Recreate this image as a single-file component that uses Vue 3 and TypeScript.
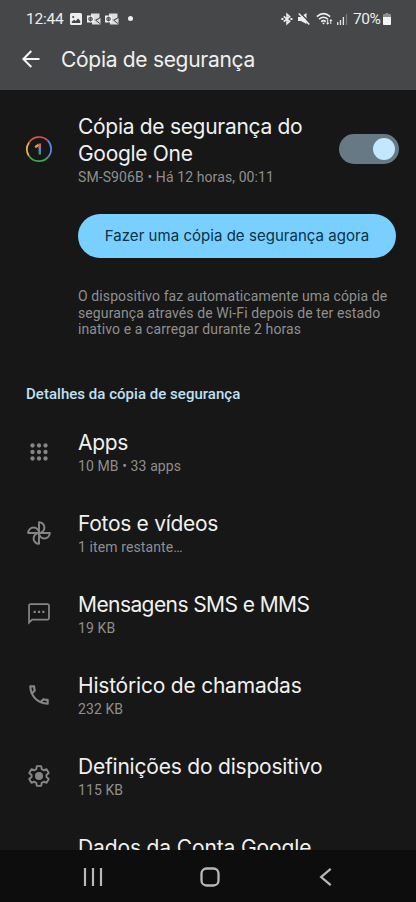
<script setup lang="ts">
interface BackupItem {
  icon: 'apps' | 'photos' | 'sms' | 'call' | 'settings' | 'none'
  title: string
  detail: string
}

const items: BackupItem[] = [
  { icon: 'apps', title: 'Apps', detail: '10 MB • 33 apps' },
  { icon: 'photos', title: 'Fotos e vídeos', detail: '1 item restante…' },
  { icon: 'sms', title: 'Mensagens SMS e MMS', detail: '19 KB' },
  { icon: 'call', title: 'Histórico de chamadas', detail: '232 KB' },
  { icon: 'settings', title: 'Definições do dispositivo', detail: '115 KB' },
  { icon: 'none', title: 'Dados da Conta Google', detail: '' },
]
</script>

<template>
  <div class="screen">
    <header class="top">
      <div class="status">
        <span class="clock">12:44</span>
        <svg class="s-img" width="12" height="12" viewBox="0 0 12 12"><path fill="#eee" fill-rule="evenodd" d="M1.5 0h9Q12 0 12 1.5v9q0 1.500-1.500 1.500h-9Q0 12 0 10.500v-9Q0 0 1.500 0ZM1.800 8.600v1.400h8.400V7.700L8 5.600 5.800 7.900 4.300 6.700Z M3.200 3a1 1 0 1 0 .01 0Z" /></svg>
        <svg v-for="n in 2" :key="n" class="s-mail" width="14" height="12" viewBox="0 0 14 12">
          <path d="M4 0.500h8.500v4L8 7 4 5Z" fill="#ddd" />
          <path d="M5 5.500 9 7.800 13.500 5v6.500H5Z" fill="#ddd" />
          <path d="m9 7.500 4.500 3.500" stroke="#464749" />
          <rect x="0" y="2.500" width="7" height="7" fill="#eee" />
          <path d="M2 4.500h3v3H2ZM3.500 3.500v5M1 6h5" fill="none" stroke="#464749" stroke-width=".8" />
        </svg>
        <i class="dot"></i>
        <span class="grow"></span>
        <svg class="s-bt" width="12" height="14" viewBox="0 0 12 14" fill="none" stroke="#eee" stroke-width="1.500"><path d="m2.700 4.300 6 5-2.700 2.500V2.200l2.700 2.500-6 5" /><path d="M.4 7h2M9.400 7h2" stroke-width="1.800" /></svg>
        <svg class="s-mute" width="12" height="12" viewBox="0 0 12 12"><path d="M0 4h2.500L8.500 0v11L3 8H0Z" fill="#eee" /><path d="m1.500 -1 11 11.500" stroke="#464749" stroke-width="1.400" /><path d="m.7.500 10.600 11" stroke="#eee" stroke-width="1.500" /></svg>
        <svg class="s-wifi" width="18" height="14" viewBox="0 0 18 14"><g fill="none" stroke="#eee" stroke-width="1.500"><path d="M.8 4.600q6.700-6 13.400 0M3 7.200q4.500-4 9 0M5.200 9.600q2.300-2 4.600 0" /></g><path d="m7.500 12.500-1.600-1.700h3.200ZM10 10.700h1.200V7.500h1v3.200h1.200l-1.700 2ZM13.300 9h1v3h1V9h1.200L14.900 7Z" fill="#eee" /></svg>
        <svg class="s-signal" width="11" height="12" viewBox="0 0 11 12"><path d="M.7 12V9M3.500 12V7M6.400 12V4" stroke="#e8e8e8" stroke-width="1.300" /><path d="M9.500 12V1" stroke="#77787a" stroke-width="1.300" /></svg>
        <span class="percent">70%</span>
        <svg class="s-batt" width="8" height="12" viewBox="0 0 8 12"><path d="M2.500 0h3v1H7q1 0 1 1v9q0 1-1 1H1q-1 0-1-1V2q0-1 1-1h1.500Z" fill="#8e8f90" /><path d="M0 4h8v7q0 1-1 1H1q-1 0-1-1Z" fill="#f4f4f4" /></svg>
      </div>
      <div class="bar">
        <svg width="18" height="18" viewBox="0 0 18 18" fill="none" stroke="#f4f4f4" stroke-width="2"><path d="M17.500 9H1.500M9.300 1 1.400 9l7.900 8" /></svg>
        <h1>Cópia de segurança</h1>
      </div>
    </header>

    <main>
      <section class="account">
        <svg class="one" width="28" height="28" viewBox="0 0 28 28" fill="none" stroke-width="1.700">
          <path d="M4 7.500A12.200 12.200 0 0 1 22.600 5.400" stroke="#df5149" />
          <path d="M22.600 5.400A12.200 12.200 0 0 1 23.500 21.600" stroke="#5389e8" />
          <path d="M23.500 21.600A12.200 12.200 0 0 1 3.800 20.700" stroke="#3fa35b" />
          <path d="M3.800 20.700A12.200 12.200 0 0 1 4 7.500" stroke="#edbb38" />
          <path d="m10.200 12.300 3.500-2.500" stroke="#e2a33c" stroke-width="2.300" />
          <path d="M14.800 8.500v5" stroke="#dc6258" stroke-width="2.400" />
          <path d="M14.800 12v4" stroke="#5389e8" stroke-width="2.400" />
          <path d="M14.800 15.500v4" stroke="#3f9c78" stroke-width="2.400" />
        </svg>
        <div class="account-text">
          <h2>Cópia de segurança do<br />Google One</h2>
          <p>SM-S906B • Há 12 horas, 00:11</p>
        </div>
        <div class="switch" role="switch" aria-checked="true"><i></i></div>
      </section>
      <button class="backup">Fazer uma cópia de segurança agora</button>
      <p class="info">O dispositivo faz automaticamente uma cópia de<br />segurança através de Wi-Fi depois de ter estado<br />inativo e a carregar durante 2 horas</p>
      <h3>Detalhes da cópia de segurança</h3>
      <ul>
        <li v-for="item in items" :key="item.title">
          <svg class="icon" width="26" height="26" viewBox="0 0 24 24" fill="none" stroke="#858585" stroke-width="1.800">
            <g v-if="item.icon === 'apps'" fill="#858585" stroke="none">
              <template v-for="y in 3" :key="y">
                <circle v-for="x in 3" :key="x" :cx="6 * x" :cy="6 * y" r="2" />
              </template>
            </g>
            <g v-else-if="item.icon === 'photos'" stroke-linejoin="round">
              <path v-for="turn in 4" :key="turn" d="M12 12V2A5 5 0 0 1 12 12" :transform="`rotate(${turn * 90} 12 12)`" />
            </g>
            <g v-else-if="item.icon === 'sms'" fill="#858585" stroke="none">
              <path d="M20 2H4c-1.100 0-2 .9-2 2v18l4-4h14c1.100 0 2-.9 2-2V4c0-1.100-.9-2-2-2Zm.4 14.400H5.300L3.600 18V3.600h16.800ZM7 9h2v2H7Zm4 0h2v2h-2Zm4 0h2v2h-2Z" />
            </g>
            <path v-else-if="item.icon === 'call'" fill="#858585" stroke="none" d="M6.540 5c.06.89.21 1.760.45 2.590l-1.200 1.200c-.41-1.200-.67-2.470-.76-3.790h1.510m9.860 12.020c.85.24 1.720.39 2.600.45v1.490c-1.320-.09-2.590-.35-3.800-.75l1.200-1.190M7.500 3H4c-.55 0-1 .45-1 1 0 9.390 7.610 17 17 17 .55 0 1-.45 1-1v-3.490c0-.55-.45-1-1-1-1.240 0-2.450-.2-3.570-.57-.1-.04-.21-.05-.31-.05-.26 0-.51.100-.71.290l-2.200 2.200c-2.830-1.450-5.150-3.760-6.590-6.590l2.200-2.200c.28-.28.360-.67.250-1.020C8.700 6.450 8.500 5.250 8.500 4c0-.55-.45-1-1-1Z" />
            <g v-else-if="item.icon === 'settings'">
              <path stroke-linejoin="round" d="M10 2.900h4l.5 2.700 1.900 1.100 2.600-.9 2 3.400-2.100 1.800v2l2.100 1.800-2 3.400-2.600-.9-1.900 1.100-.5 2.700h-4l-.5-2.700-1.900-1.100-2.600.9-2-3.400L5.100 13v-2L3 9.200l2-3.400 2.600.9 1.900-1.100Z" />
              <circle cx="12" cy="12" r="3.700" fill="#858585" stroke="none" />
            </g>
          </svg>
          <div>
            <h2 :class="item.icon">{{ item.title }}</h2>
            <p>{{ item.detail }}</p>
          </div>
        </li>
      </ul>
    </main>

    <nav>
      <svg width="20" height="20" viewBox="0 0 20 20" stroke="#b8b8b8" stroke-width="2.200"><path d="M2 1v18M10 1v18M18 1v18" /></svg>
      <svg width="20" height="20" viewBox="0 0 20 20" fill="none" stroke="#b8b8b8" stroke-width="2.300"><rect x="1.500" y="1.500" width="17" height="17" rx="5" /></svg>
      <svg width="20" height="20" viewBox="0 0 20 20" fill="none" stroke="#b8b8b8" stroke-width="2.300"><path d="m14.700 1.800-9.500 8.200 9.500 8.200" /></svg>
    </nav>
  </div>
</template>

<style>
body { background: #171717; }
</style>

<style scoped>
* { box-sizing: border-box; margin: 0; padding: 0; }
.screen { width: 416px; height: 902px; display: flex; flex-direction: column; overflow: hidden; background: #171717; color: #f0f0f0; font-family: Roboto, sans-serif; }
svg { display: block; flex: none; }
.top { height: 90px; flex: none; background: #464749; }
.status { height: 37px; padding: 0 26px 0 26px; display: flex; align-items: center; font-size: 15.500px; color: #ededed; }
.clock { width: 37px; margin-right: 7px; letter-spacing: -.2px; white-space: nowrap; }
.s-img { margin-right: 5px; }
.s-mail { margin-right: 4px; }
.dot { width: 5px; height: 5px; border-radius: 50%; background: #eee; margin-left: 5px; }
.grow { flex: 1; }
.s-bt { margin-right: 5px; }
.s-mute { margin-right: 6px; }
.s-wifi { margin-right: 3px; }
.s-signal { margin-right: 5px; }
.percent { width: 29px; letter-spacing: -.5px; white-space: nowrap; font-size: 15.500px; }
.s-batt { margin: 0 0 0 1px; margin-right: -1px; }
.bar { height: 44px; padding-left: 22px; display: flex; align-items: center; gap: 21px; }
h1, h2 { font-family: Inter, sans-serif; font-weight: 400; font-size: 21px; line-height: 27px; letter-spacing: -.3px; white-space: nowrap; }
h2.sms { letter-spacing: -.58px; }
h2.call, h2.settings { letter-spacing: -.21px; }
h2.none { letter-spacing: -.13px; }
main { flex: 1; min-height: 0; overflow: hidden; }
.account { display: flex; padding: 23px 17px 0 25px; height: 124px; }
.one { margin-top: 22px; }
.account-text { margin-left: 25px; flex: 1; }
p { color: #8f8f8f; font-size: 14px; line-height: 17px; letter-spacing: .1px; white-space: nowrap; }
.account-text p { margin-top: 2px; }
.switch { width: 60px; height: 30px; margin-top: 21px; border-radius: 15px; background: #687986; display: flex; align-items: center; justify-content: flex-end; padding-right: 4px; }
.switch i { width: 22px; height: 22px; border-radius: 50%; background: #c3e7ff; }
.backup { display: block; width: 318px; height: 44px; margin-left: 78px; border: 0; border-radius: 22px; background: #79d0ff; color: #093046; font: 400 15px/44px Inter, sans-serif; letter-spacing: .04px; white-space: nowrap; }
.info { margin: 30px 0 0 78px; line-height: 16.600px; }
h3 { margin: 46px 0 0 26px; color: #bfe0f4; font-size: 15px; line-height: 20px; font-weight: 500; letter-spacing: .03px; white-space: nowrap; }
ul { list-style: none; margin-top: 25px; }
li { height: 81px; padding-left: 26px; display: flex; }
.icon { margin: 10px 26px 0 0; }
li p { margin-top: 2px; }
nav { height: 52px; flex: none; background: #0d0d0d; display: flex; align-items: center; justify-content: space-between; padding: 2px 80px 0 83px; }
</style>
